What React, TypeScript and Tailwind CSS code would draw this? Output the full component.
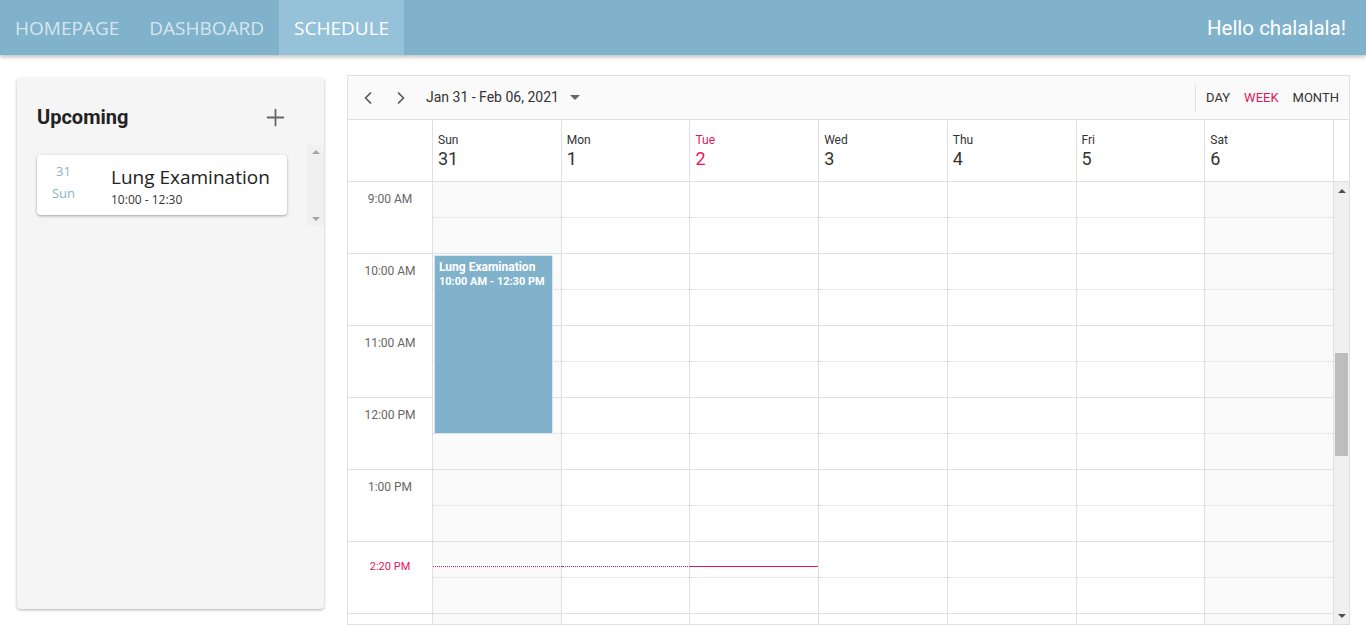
import { ChevronLeft, ChevronRight, Plus } from "lucide-react";

const days = [
  { name: "Sun", num: "31", off: true },
  { name: "Mon", num: "1" },
  { name: "Tue", num: "2", today: true },
  { name: "Wed", num: "3" },
  { name: "Thu", num: "4" },
  { name: "Fri", num: "5" },
  { name: "Sat", num: "6", off: true },
];

const hours = ["9:00 AM", "10:00 AM", "11:00 AM", "12:00 PM", "1:00 PM", "", ""];

function Nav() {
  return (
    <header className="relative z-10 flex h-[55px] items-stretch bg-[#81b2cb] shadow-[0_2px_4px_rgba(0,0,0,0.25)] font-['Open_Sans',sans-serif]">
      <a className="flex items-center px-[15px] pt-[2px] text-[19px] text-[#d5e6ef]">HOMEPAGE</a>
      <a className="flex items-center px-[15px] pt-[2px] text-[19px] text-[#d5e6ef]">DASHBOARD</a>
      <a className="flex items-center bg-[#96c2d9] px-[15px] pt-[2px] text-[19px] text-white">SCHEDULE</a>
      <div className="ml-auto flex items-center pr-[20px] pt-[1px] font-['Roboto',sans-serif] text-[20.5px] text-white">
        Hello chalalala!
      </div>
    </header>
  );
}

function Upcoming() {
  return (
    <aside className="mt-[3px] flex h-[531px] w-[307px] shrink-0 flex-col rounded-[4px] bg-[#f5f5f5] shadow-[0_1px_3px_rgba(0,0,0,0.3)]">
      <div className="flex items-center justify-between pl-[20px] pr-[35px] pt-[24px] pb-[13px]">
        <h2 className="font-['Roboto',sans-serif] text-[20px] font-bold text-[#222]">Upcoming</h2>
        <Plus size={27} strokeWidth={1.6} className="text-[#666]" />
      </div>
      <div className="flex h-[81px] pl-[20px]">
        <div className="flex-1 pt-[10px] pr-[20px]">
          <div className="flex h-[60px] items-start rounded-[4px] bg-white shadow-[0_1px_3px_rgba(0,0,0,0.35)] font-['Open_Sans',sans-serif]">
            <div className="flex w-[52px] flex-col items-center pl-[1px] pt-[5px] text-[13px] leading-[22px] text-[#8fb3c7]">
              <span>31</span>
              <span>Sun</span>
            </div>
            <div className="ml-[22px] flex flex-col pt-[9px]">
              <span className="text-[19px] leading-[26px] text-[#222]">Lung Examination</span>
              <span className="text-[12px] leading-[20px] text-[#333]">10:00 - 12:30</span>
            </div>
          </div>
        </div>
        <div className="flex w-[17px] flex-col items-center justify-between bg-[#f0f0f0] py-[5px]">
          <span className="h-0 w-0 border-x-[4px] border-b-[4px] border-x-transparent border-b-[#a3a3a3]" />
          <span className="h-0 w-0 border-x-[4px] border-t-[4px] border-x-transparent border-t-[#a3a3a3]" />
        </div>
      </div>
    </aside>
  );
}

function Toolbar() {
  return (
    <div className="flex h-[44px] items-center border-b border-[#e0e0e0] bg-[#fafafa] font-['Roboto',sans-serif]">
      <ChevronLeft size={20} strokeWidth={2} className="ml-[10px] text-[#555]" />
      <ChevronRight size={20} strokeWidth={2} className="ml-[13px] text-[#555]" />
      <span className="ml-[15px] text-[14px] text-[#333]">Jan 31 - Feb 06, 2021</span>
      <span className="ml-[11px] h-0 w-0 border-x-[5px] border-t-[5px] border-x-transparent border-t-[#666]" />
      <div className="ml-auto flex h-[26px] items-center border-l border-[#e0e0e0] pl-[10px] pr-[10px] text-[13px]">
        <span className="text-[#333]">DAY</span>
        <span className="ml-[14px] text-[#e3165b]">WEEK</span>
        <span className="ml-[14px] text-[#333]">MONTH</span>
      </div>
    </div>
  );
}

function HeaderRow() {
  return (
    <div className="grid h-[62px] grid-cols-[85px_repeat(7,1fr)_15px] border-b border-[#e0e0e0] font-['Roboto',sans-serif]">
      <div className="border-r border-[#e0e0e0]" />
      {days.map((d) => (
        <div key={d.name} className="border-r border-[#e0e0e0] pl-[5px] pt-[12px]">
          <div className={`text-[12px] leading-[16px] ${d.today ? "text-[#e3165b]" : "text-[#333]"}`}>{d.name}</div>
          <div className={`text-[18px] leading-[22px] ${d.today ? "text-[#e3165b]" : "text-[#333]"}`}>{d.num}</div>
        </div>
      ))}
      <div />
    </div>
  );
}

function Body() {
  return (
    <div className="relative flex h-[442px] overflow-hidden font-['Roboto',sans-serif]">
      <div className="w-[85px] shrink-0 border-r border-[#e0e0e0]">
        {hours.map((h, i) => (
          <div key={i} className="relative h-[72px] border-b border-[#e0e0e0]">
            {h && (
              <span className="absolute left-0 right-0 top-[8px] text-center text-[12px] text-[#666]">{h}</span>
            )}
            {i === 5 && (
              <span className="absolute left-0 right-0 top-[17px] text-center text-[11px] text-[#e3165b]">2:20 PM</span>
            )}
          </div>
        ))}
      </div>
      <div className="grid flex-1 grid-cols-7">
        {days.map((d, di) => (
          <div key={d.name} className={`relative border-r border-[#e0e0e0] ${d.off ? "bg-[#fafafa]" : "bg-white"}`}>
            {hours.map((_, i) => (
              <div key={i} className="h-[72px] border-b border-[#e0e0e0]">
                <div className="h-[36px] border-b border-dotted border-[#d6d6d6]" />
              </div>
            ))}
            {di === 0 && (
              <div className="absolute left-[1px] top-[73px] h-[179px] w-[119px] border border-[#d8e6ee] bg-[#81b2cb] px-[4px] pt-[3px] text-white">
                <div className="text-[12px] font-bold leading-[16px]">Lung Examination</div>
                <div className="text-[11px] font-bold leading-[13px]">10:00 AM - 12:30 PM</div>
              </div>
            )}
            {di < 2 && <div className="absolute left-0 right-[-1px] top-[384px] border-t border-dotted border-[#e3165b]" />}
            {di === 2 && <div className="absolute left-0 right-0 top-[384px] h-px bg-[#e3165b]" />}
          </div>
        ))}
      </div>
      <div className="relative w-[15px] shrink-0 bg-[#f0f0f0]">
        <span className="absolute left-[4px] top-[7px] h-0 w-0 border-x-[4px] border-b-[4px] border-x-transparent border-b-[#505050]" />
        <div className="absolute left-[1px] top-[171px] h-[103px] w-[13px] bg-[#bdbdbd]" />
        <span className="absolute left-[4px] bottom-[6px] h-0 w-0 border-x-[4px] border-t-[4px] border-x-transparent border-t-[#505050]" />
      </div>
    </div>
  );
}

export default function App() {
  return (
    <div className="h-[625px] overflow-hidden bg-white">
      <Nav />
      <main className="flex pl-[17px] pt-[20px]">
        <Upcoming />
        <section className="ml-[23px] h-[550px] w-[1003px] border border-[#e0e0e0]">
          <Toolbar />
          <HeaderRow />
          <Body />
        </section>
      </main>
    </div>
  );
}
